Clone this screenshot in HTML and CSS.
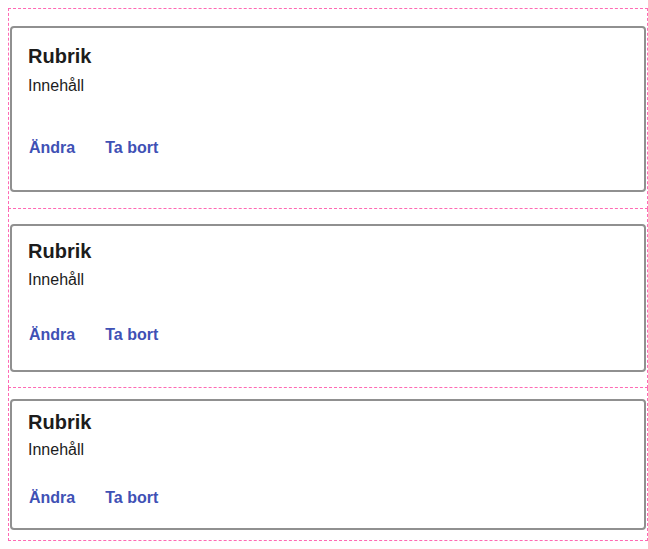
FILE: index.html
```html
<!DOCTYPE html>
<html lang="sv">
<head>
<meta charset="utf-8">
<title>Kort</title>
<link rel="stylesheet" href="styles.css">
</head>
<body>
<div class="stack">
  <section class="slot slot-1">
    <div class="card">
      <h2 class="title">Rubrik</h2>
      <p class="content">Innehåll</p>
      <div class="actions"><a class="action">Ändra</a><a class="action">Ta bort</a></div>
    </div>
  </section>
  <section class="slot slot-2">
    <div class="card">
      <h2 class="title">Rubrik</h2>
      <p class="content">Innehåll</p>
      <div class="actions"><a class="action">Ändra</a><a class="action">Ta bort</a></div>
    </div>
  </section>
  <section class="slot slot-3">
    <div class="card">
      <h2 class="title">Rubrik</h2>
      <p class="content">Innehåll</p>
      <div class="actions"><a class="action">Ändra</a><a class="action">Ta bort</a></div>
    </div>
  </section>
</div>
</body>
</html>
```

FILE: styles.css
```css
html, body {
  margin: 0;
  padding: 0;
  background: #ffffff;
}
body {
  padding: 8px 0 0 8px;
  font-family: "Liberation Sans", Arial, sans-serif;
  color: rgba(0, 0, 0, 0.87);
}
.stack {
  width: 640px;
  display: flex;
  flex-direction: column;
}
.slot {
  box-sizing: border-box;
  width: 640px;
  border: 1px dashed #ff69b4;
  border-top: none;
  padding: 0 1px;
}
.slot-1 {
  border-top: 1px dashed #ff69b4;
}
.card {
  border: 2px solid #909090;
  border-radius: 4px;
  padding-left: 16px;
  padding-right: 16px;
}
.title {
  margin: 0;
  font-size: 20px;
  font-weight: bold;
  line-height: 23px;
  color: #1c1c1c;
}
.content {
  margin: 0;
  font-size: 16px;
  line-height: 18px;
  color: #1c1c1c;
}
.actions {
  display: flex;
  gap: 30px;
  padding-left: 1px;
}
.action {
  font-size: 16px;
  font-weight: bold;
  line-height: 18px;
  color: #3f51b5;
  cursor: pointer;
}

.slot-1 .card { margin: 17px 0 16px; padding-top: 17px; padding-bottom: 33px; }
.slot-1 .content { margin-top: 9px; }
.slot-1 .actions { margin-top: 44px; }

.slot-2 .card { margin: 15px 0 15px; padding-top: 14px; padding-bottom: 26px; }
.slot-2 .content { margin-top: 8px; }
.slot-2 .actions { margin-top: 37px; }

.slot-3 .card { margin: 11px 0 10px; padding-top: 10px; padding-bottom: 21px; }
.slot-3 .content { margin-top: 7px; }
.slot-3 .actions { margin-top: 30px; }
```
